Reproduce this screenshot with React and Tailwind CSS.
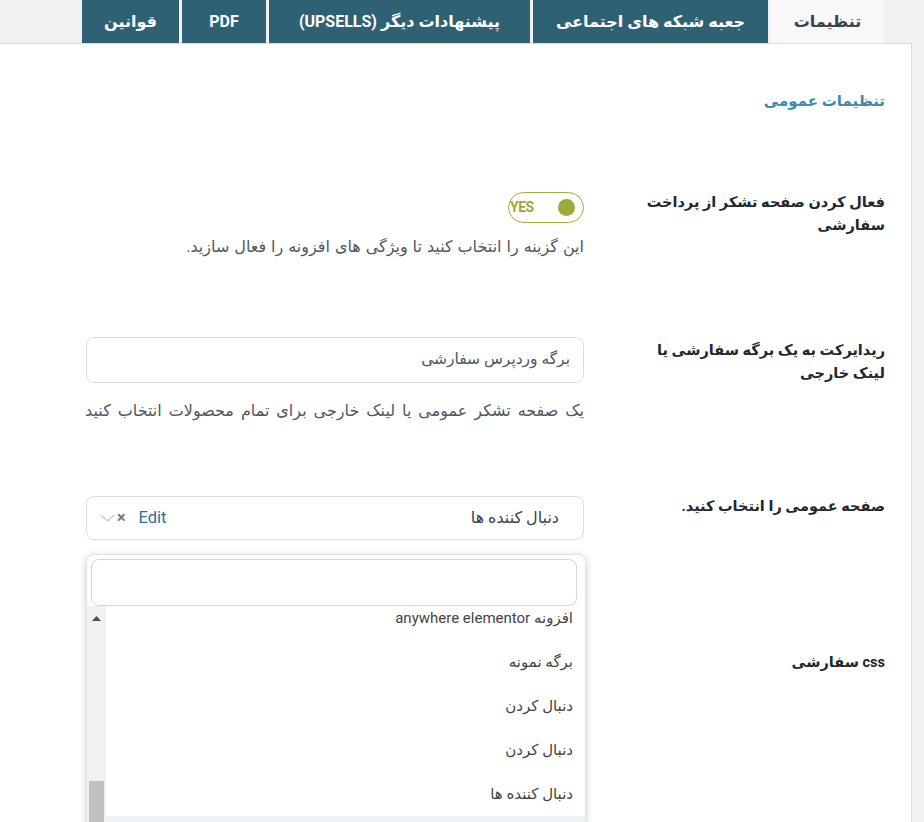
import React from "react";

const tabs = [
  { label: "تنظیمات", w: "w-[113px]", active: true },
  { label: "جعبه شبکه های اجتماعی", w: "w-[235px]" },
  { label: "پیشنهادات دیگر (UPSELLS)", w: "w-[261px]" },
  { label: "PDF", w: "w-[84px]" },
  { label: "قوانین", w: "w-[97px]" },
];

const options = [
  "افزونه anywhere elementor",
  "برگه نمونه",
  "دنبال کردن",
  "دنبال کردن",
  "دنبال کننده ها",
  "",
];

function Label({ children, className = "" }) {
  return (
    <div
      className={`w-[240px] shrink-0 whitespace-nowrap text-[14.5px] font-bold leading-[23px] text-[#23282d] ${className}`}
    >
      {children}
    </div>
  );
}

export default function App() {
  return (
    <div
      dir="rtl"
      className="w-[924px] h-[822px] overflow-hidden bg-[#f1f1f1]"
      style={{ fontFamily: 'Roboto, "DejaVu Sans", sans-serif' }}
    >
      {/* tabs */}
      <div className="flex h-[43px] gap-[3px] pr-[40px]">
        {tabs.map((t, i) => (
          <div
            key={i}
            className={`${t.w} flex items-center justify-center text-[16px] font-bold ${
              t.active
                ? "bg-[#f9f9f9] text-[#3c434a]"
                : "bg-[#2f6175] text-white"
            }`}
          >
            {t.label}
          </div>
        ))}
      </div>

      {/* panel */}
      <div className="mr-[12px] h-[800px] border-t border-r border-[#dcdcde] bg-white pr-[26px] pt-[45px]">
        <h2 className="text-[15px] font-bold leading-[24px] text-[#3a8bab]">
          تنظیمات عمومی
        </h2>

        {/* row 1 */}
        <div className="mt-[78px] flex gap-[61px]">
          <Label>
            فعال کردن صفحه تشکر از پرداخت
            <br />
            سفارشی
          </Label>
          <div className="w-[498px] pt-[1px]">
            <div className="flex h-[31px] w-[76px] items-center justify-between rounded-full border border-[#9fae3d] pl-[1px] pr-[8px]">
              <span className="h-[17px] w-[17px] rounded-full bg-[#9aab3a]" />
              <span className="text-[14px] font-bold tracking-[-0.5px] text-[#9aab3a]">
                YES
              </span>
            </div>
            <p className="mt-[13px] text-[16px] leading-[22px] text-[#50575e] [word-spacing:1px]">
              این گزینه را انتخاب کنید تا ویژگی های افزونه را فعال سازید.
            </p>
          </div>
        </div>

        {/* row 2 */}
        <div className="mt-[79px] flex gap-[61px]">
          <Label className="pt-[2px]">
            ریدایرکت به یک برگه سفارشی یا
            <br />
            لینک خارجی
          </Label>
          <div className="w-[498px]">
            <div className="flex h-[46px] items-center rounded-[8px] border border-[#dcdcde] px-[13px] text-[15.5px] text-[#50575e]">
              برگه وردپرس سفارشی
            </div>
            <p className="mt-[17px] whitespace-nowrap text-[16px] leading-[22px] text-[#50575e] [word-spacing:3px]">
              یک صفحه تشکر عمومی یا لینک خارجی برای تمام محصولات انتخاب کنید
            </p>
          </div>
        </div>

        {/* row 3 */}
        <div className="mt-[73px] flex gap-[61px]">
          <Label>صفحه عمومی را انتخاب کنید.</Label>
          <div className="relative w-[498px] pt-[1px]">
            <div className="flex h-[44px] items-center justify-between rounded-[8px] border border-[#dcdcde] pl-[13px] pr-[24px]">
              <span className="text-[16px] text-[#3c434a]">دنبال کننده ها</span>
              <span className="flex items-center gap-[13px]">
                <span className="text-[16.5px] text-[#2a6f97]">Edit</span>
                <span className="flex items-center gap-[2px]">
                  <span className="text-[16px] font-bold leading-none text-[#777]">
                    ×
                  </span>
                  <svg width="15" height="10" viewBox="0 0 15 10">
                    <path d="M1 2l6.5 6 6.5-6" fill="none" stroke="#cfcfcf" strokeWidth="1.6" />
                  </svg>
                </span>
              </span>
            </div>

            {/* open dropdown */}
            <div className="absolute right-[-2px] top-[59px] z-10 h-[300px] w-[500px] rounded-t-[8px] border border-[#e2e2e2] bg-white shadow-[0_2px_8px_rgba(0,0,0,0.18)]">
              <div className="px-[8px] pl-[4px] pt-[4px]">
                <div className="h-[47px] rounded-[8px] border border-[#d5d5d5] bg-white" />
              </div>
              <div className="flex h-[260px] overflow-hidden">
                <div className="flex-1 overflow-hidden">
                  <div className="-mt-[10px]">
                    {options.map((o, i) => (
                      <div
                        key={i}
                        className={`flex h-[44px] items-center pr-[12px] text-[15px] text-[#444] ${
                          i === 5 ? "bg-[#eef3f6]" : ""
                        }`}
                      >
                        {o}
                      </div>
                    ))}
                  </div>
                </div>
                <div className="flex w-[19px] flex-col bg-[#f1f1f1]">
                  <div className="flex h-[30px] items-center justify-center">
                    <svg width="9" height="5" viewBox="0 0 9 5">
                      <path d="M0 5L4.5 0L9 5z" fill="#505050" />
                    </svg>
                  </div>
                  <div className="mt-[150px] mx-[2px] h-[100px] bg-[#c1c1c1]" />
                </div>
              </div>
            </div>
          </div>
        </div>

        {/* row 4 */}
        <div className="mt-[111px] flex gap-[61px]">
          <Label>css سفارشی</Label>
        </div>
      </div>
    </div>
  );
}
